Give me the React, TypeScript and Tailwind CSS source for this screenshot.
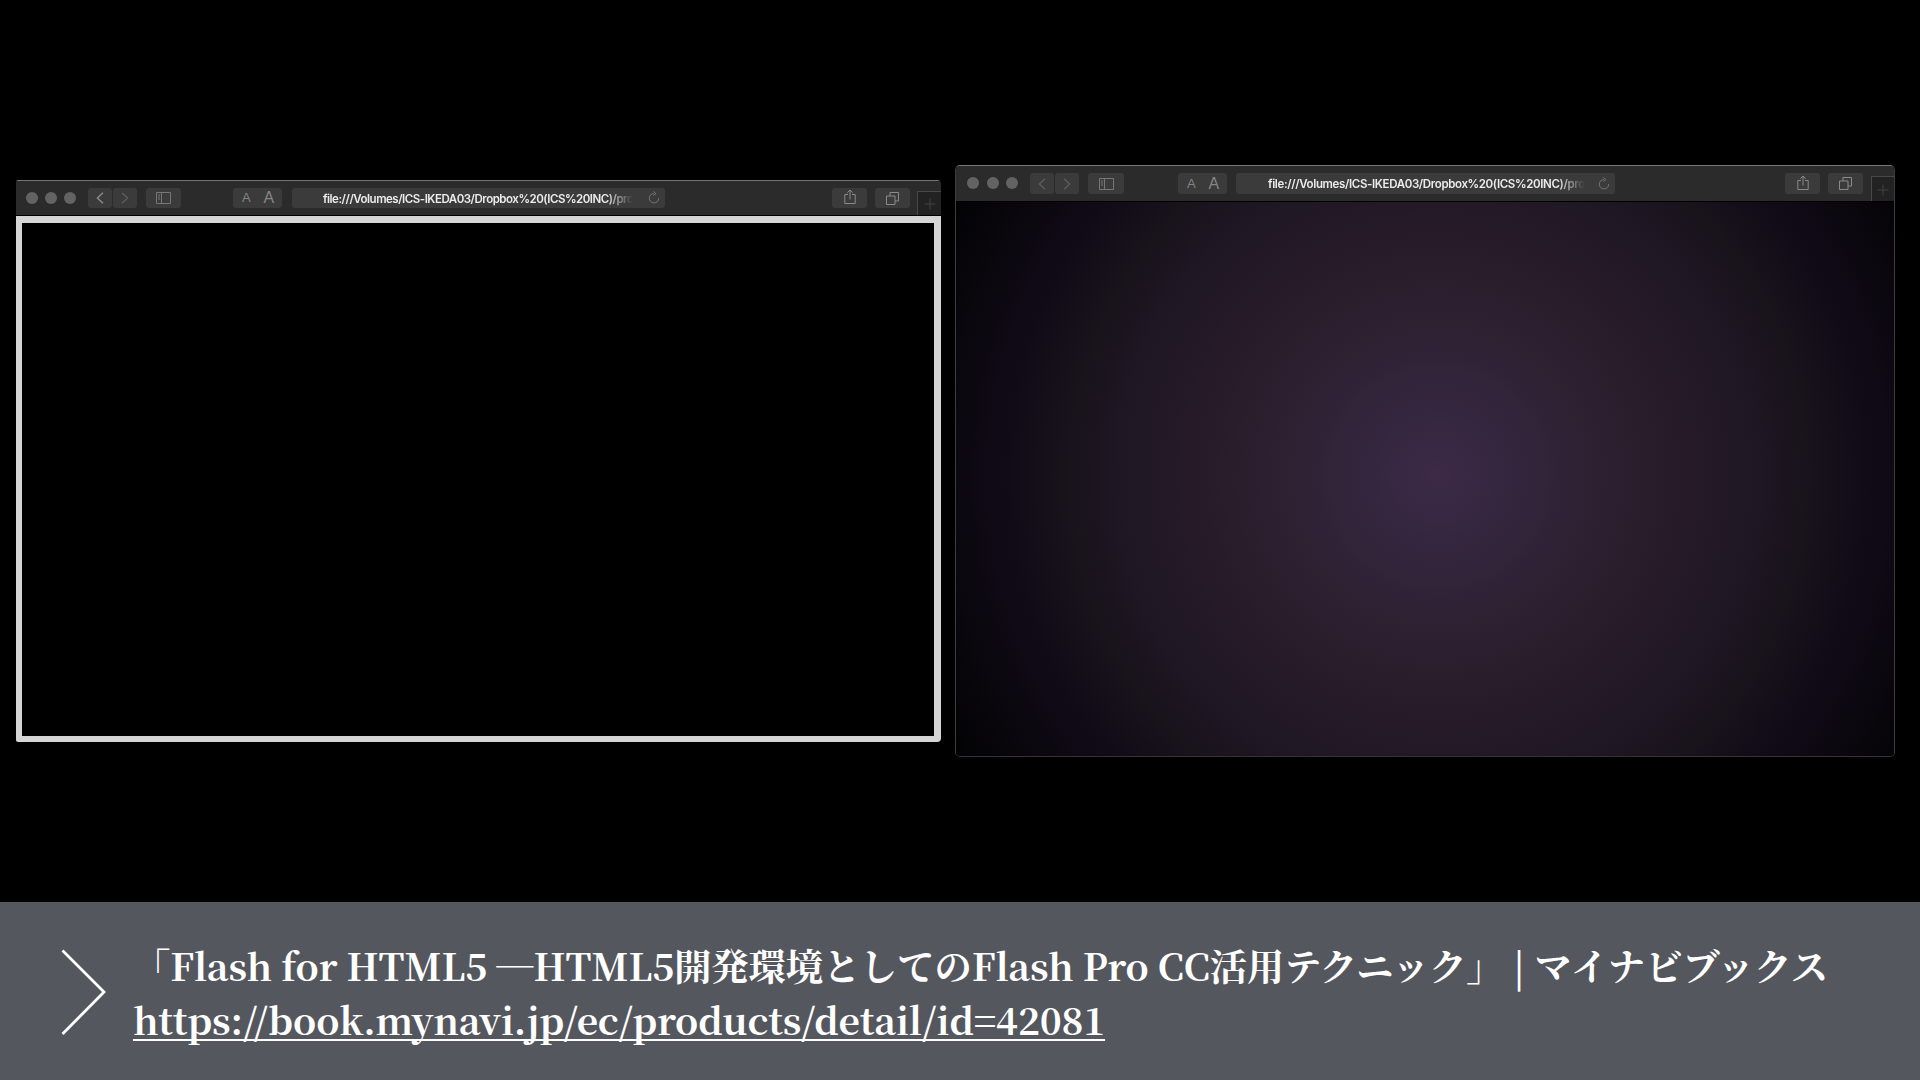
import React from "react";

type BarSpec = {
  bar: string; lights: string; nav: string; btn: string; side: string; aa: string; url: string; urlText: string; share: string; tabs: string; plus: string;
  dimBack?: boolean;
};

const URL_TEXT = "file:///Volumes/ICS-IKEDA03/Dropbox%20(ICS%20INC)/pro";

function Btn({ className, children }: { className: string; children: React.ReactNode }) {
  return <div className={`flex shrink-0 items-center justify-center rounded-[3px] bg-[#3b3b3b] text-[#858585] ${className}`}>{children}</div>;
}

function Toolbar({ s }: { s: BarSpec }) {
  return (
    <div className={`flex shrink-0 bg-[#2b2b2b] ${s.bar}`}>
      <div className={`flex shrink-0 ${s.lights}`}>
        <i className="size-3 rounded-full bg-[#636363]" />
        <i className="size-3 rounded-full bg-[#636363]" />
        <i className="size-3 rounded-full bg-[#636363]" />
      </div>
      <div className={`flex shrink-0 gap-px ${s.nav}`}>
        <Btn className={s.btn}>
          <svg width="8" height="12" viewBox="0 0 8 12" fill="none" stroke={s.dimBack ? "#5c5c5c" : "#8c8c8c"} strokeWidth="1.4"><path d="M7 .7 1.4 6 7 11.3" /></svg>
        </Btn>
        <Btn className={s.btn}>
          <svg width="8" height="12" viewBox="0 0 8 12" fill="none" stroke="#5c5c5c" strokeWidth="1.4"><path d="m1 .7 5.600 5.300L1 11.300" /></svg>
        </Btn>
      </div>
      <Btn className={s.side}>
        <svg width="15" height="12" viewBox="0 0 15 12" fill="none" stroke="#777" strokeWidth="1"><path d="M.5.5h14v11H.5zM5.500.5v11M2 3h2M2 5h2M2 7h2" /></svg>
      </Btn>
      <Btn className={s.aa}>
        <span className="w-1/2 pl-0.5 text-center text-[13px] leading-5">A</span>
        <span className="w-1/2 pr-0.5 text-center text-[16px] leading-5">A</span>
      </Btn>
      <div className={`flex shrink-0 items-center rounded-[3px] bg-[#3b3b3b] ${s.url}`}>
        <div className={`pt-px whitespace-nowrap font-['Inter',sans-serif] text-[11.5px] leading-5 font-semibold text-[#ececec] [mask-image:linear-gradient(to_right,black_91%,transparent_100%)] ${s.urlText}`}>{URL_TEXT}</div>
        <svg className="mr-[5px] ml-auto" width="12" height="14" viewBox="0 0 12 14" fill="none" stroke="#747474" strokeWidth="1"><path d="M6 2.500a4.700 4.700 0 1 0 4.700 4.700M5.500.5 8 2.600 5.500 4.500" /></svg>
      </div>
      <Btn className={s.share}>
        <svg className="mb-0.5" width="12" height="16" viewBox="0 0 12 16" fill="none" stroke="#8a8a8a" strokeWidth="1"><path d="M4 5.500H.8v9h10.400v-9H8M6 10.500V1.200M3.300 3.700 6 1l2.700 2.700" /></svg>
      </Btn>
      <Btn className={s.tabs}>
        <svg width="13" height="13" viewBox="0 0 13 13" fill="none" stroke="#8a8a8a" strokeWidth="1"><path d="M.5 4h8.500v8.500H.5zM4 4V.5h8.500v8.500H9" /></svg>
      </Btn>
      <div className={`flex flex-1 items-center justify-center border-t border-l border-[#484848] bg-[#222] pt-px ${s.plus}`}>
        <svg width="12" height="12" viewBox="0 0 12 12" stroke="#424242"><path d="M6 .5v11M.5 6h11" /></svg>
      </div>
    </div>
  );
}

const left: BarSpec = {
  bar: "h-[34px]", lights: "ml-[10px] mt-[11px] gap-[7px]", nav: "ml-[12px] mt-[7px]", btn: "h-[20px] w-[24px]",
  side: "ml-[9px] mt-[7px] h-[20px] w-[35px]", aa: "ml-[52px] mt-[7px] h-[20px] w-[49px]",
  url: "ml-[10px] mt-[7px] h-[20px] w-[373px]", urlText: "ml-[31px] tracking-[-0.48px]",
  share: "ml-[167px] mt-[7px] h-[20px] w-[35px]", tabs: "ml-[8px] mt-[7px] h-[20px] w-[35px]", plus: "ml-[7px] mt-[10px]",
};
const right: BarSpec = {
  bar: "h-[35px]", lights: "ml-[11px] mt-[11px] gap-[7.5px]", nav: "ml-[12px] mt-[7px]", btn: "h-[21px] w-[24px]",
  side: "ml-[9px] mt-[7px] h-[21px] w-[36px]", aa: "ml-[54px] mt-[7px] h-[21px] w-[49px]",
  url: "ml-[9px] mt-[7px] h-[21px] w-[379px]", urlText: "ml-[32px] tracking-[-0.36px]",
  share: "ml-[170px] mt-[7px] h-[21px] w-[35px]", tabs: "ml-[8px] mt-[7px] h-[21px] w-[35px]", plus: "ml-[8px] mt-[10px]",
  dimBack: true,
};

export default function App() {
  return (
    <div className="flex h-[1080px] w-[1920px] flex-col overflow-hidden bg-black font-['Liberation_Sans',sans-serif]">
      <main className="flex h-[902px] shrink-0 items-start pl-4">
        <section className="mt-[180px] flex h-[562px] w-[925px] shrink-0 flex-col overflow-hidden rounded-[4px] rounded-l-[2px]">
          <div className="h-px shrink-0 bg-[#747474]" />
          <Toolbar s={left} />
          <div className="h-px shrink-0 bg-black" />
          <div className="flex-1 border-t-[7px] border-r-[7px] border-b-[6px] border-l-[6px] border-[#d5d5d5] bg-black" />
        </section>
        <section className="mt-[165px] ml-[14px] flex h-[592px] w-[940px] shrink-0 flex-col overflow-hidden rounded-[5px] border border-t-[#777] border-r-[#3c3c3c] border-b-[#333] border-l-[#3c3c3c]">
          <Toolbar s={right} />
          <div className="h-px shrink-0 bg-black" />
          <div className="flex-1 bg-[radial-gradient(circle_at_482px_274px,#3c2a46_0%,#35263f_12%,#2e2132_27%,#271b29_42%,#211825_54%,#19131c_66%,#110b17_77%,#0a070e_88%,#020203_100%)]" />
        </section>
      </main>
      <footer className="flex h-[178px] shrink-0 bg-[#55575e] text-white">
        <svg className="mt-[45px] ml-[58px] shrink-0" width="52" height="92" viewBox="0 0 52 92" fill="none" stroke="white" strokeWidth="2.800"><path d="M4.500 3.500 46 45 4.500 87" /></svg>
        <div className="mt-[36px] ml-[23px] font-['Noto_Serif_CJK_JP','Noto_Serif_JP','Liberation_Serif','Noto_Sans_CJK_JP',serif] text-[37.3px] font-bold whitespace-nowrap">
          <p className="h-[54px] leading-[54px] tracking-[-0.11px]">「Flash for HTML5 ─HTML5開発環境としてのFlash Pro CC活用テクニック」 | マイナビブックス</p>
          <p className="h-[54px] leading-[54px] tracking-[-0.17px] underline decoration-2 underline-offset-[4px] [text-decoration-skip-ink:none]">https://book.mynavi.jp/ec/products/detail/id=42081</p>
        </div>
      </footer>
    </div>
  );
}
